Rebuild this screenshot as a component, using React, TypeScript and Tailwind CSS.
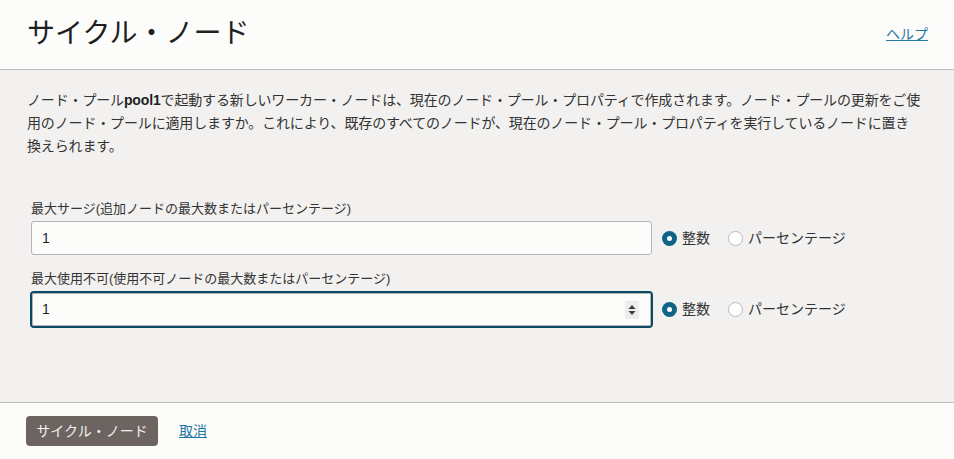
import React from 'react';

const font = { fontFamily: '"Liberation Sans", "Noto Sans CJK JP", sans-serif' };

const Radio: React.FC<{ checked?: boolean; label: string }> = ({ checked, label }) => (
  <label className="flex items-center gap-[5px] text-[14px] text-[#333]">
    {checked ? (
      <span className="w-[15px] h-[15px] rounded-full bg-[#0f6485] flex items-center justify-center">
        <span className="w-[5px] h-[5px] rounded-full bg-white" />
      </span>
    ) : (
      <span className="w-[15px] h-[15px] rounded-full bg-white border border-[#b8b8b8]" />
    )}
    {label}
  </label>
);

const Spinner = () => (
  <span className="w-[14px] h-[18px] bg-[#ececec] flex items-center justify-center">
    <svg width="8" height="12" viewBox="0 0 8 12">
      <path d="M4 1 L7.5 5 H0.5 Z" fill="#3a3a3a" />
      <path d="M4 11 L7.5 7 H0.5 Z" fill="#3a3a3a" />
    </svg>
  </span>
);

export default function App() {
  return (
    <div className="w-[954px] h-[459px] flex flex-col bg-[#f2f1f0]" style={font}>
      <div className="h-[70px] shrink-0 bg-[#fcfcfb] border-b border-[#bdbdbd] flex items-center justify-between pl-[27px] pr-[26px]">
        <h1 className="text-[28px] text-[#1f1f1f] leading-none -mt-[2px]">サイクル・ノード</h1>
        <a href="#" className="text-[14px] text-[#1f77a3] underline">ヘルプ</a>
      </div>

      <div className="flex-1 pl-[27px] pr-[27px] pt-[19px]">
        <p className="text-[14px] leading-[23px] text-[#333] tracking-[-0.15px]">
          ノード・プール<b className="font-bold text-[#1f1f1f]">pool1</b>で起動する新しいワーカー・ノードは、現在のノード・プール・プロパティで作成されます。ノード・プールの更新をご使用のノード・プールに適用しますか。これにより、既存のすべてのノードが、現在のノード・プール・プロパティを実行しているノードに置き
          <br />
          換えられます。
        </p>

        <div className="mt-[43px] pl-[4px] flex flex-col">
          <label className="text-[13px] text-[#333] leading-[16px]">最大サージ(追加ノードの最大数またはパーセンテージ)</label>
          <div className="mt-[4px] flex items-center">
            <div className="w-[621px] h-[34px] bg-[#fcfcfb] border border-[#b5b5b5] rounded-[3px] flex items-center px-[10px] text-[14px] text-[#1f1f1f]">
              1
            </div>
            <div className="ml-[10px] flex items-center gap-[18px]">
              <Radio checked label="整数" />
              <Radio label="パーセンテージ" />
            </div>
          </div>

          <label className="mt-[16px] text-[13px] text-[#333] leading-[16px]">最大使用不可(使用不可ノードの最大数またはパーセンテージ)</label>
          <div className="mt-[4px] flex items-center">
            <div className="-ml-[1px] w-[623px] h-[37px] rounded-[4px] border-2 border-[#0c4a63]">
              <div className="h-full bg-[#fcfcfb] border border-[#b5b5b5] rounded-[2px] flex items-center justify-between pl-[9px] pr-[11px] text-[14px] text-[#1f1f1f]">
                1
                <Spinner />
              </div>
            </div>
            <div className="ml-[9px] flex items-center gap-[18px]">
              <Radio checked label="整数" />
              <Radio label="パーセンテージ" />
            </div>
          </div>
        </div>
      </div>

      <div className="h-[57px] shrink-0 bg-[#fcfcfb] border-t border-[#c2bcb6] flex items-center gap-[21px] px-[26px]">
        <button className="w-[132px] h-[30px] rounded-[4px] bg-[#6b6460] text-[#f3f1ef] text-[14px]">サイクル・ノード</button>
        <a href="#" className="text-[14px] text-[#1f77a3] underline">取消</a>
      </div>
    </div>
  );
}
